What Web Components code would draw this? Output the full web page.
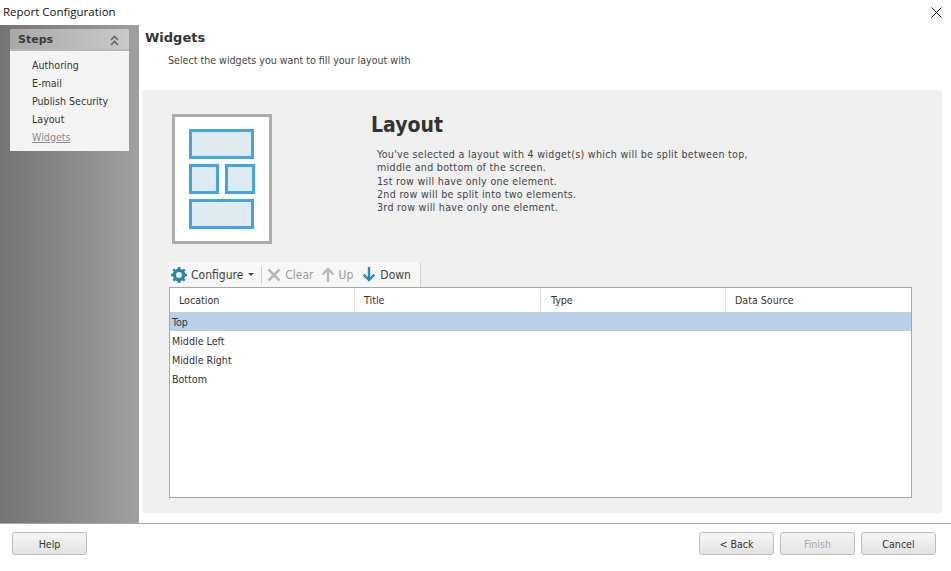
<!DOCTYPE html>
<html><head><meta charset="utf-8"><style>
html,body{margin:0;padding:0;background:#fff}
body{width:951px;height:571px;overflow:hidden;font-family:"DejaVu Sans",sans-serif}
</style></head><body>
<report-dialog></report-dialog>
<script>
class Base extends HTMLElement{
  constructor(){super();this.attachShadow({mode:'open'}).innerHTML=this.constructor.html}
}
class TitleBar extends Base{static html=`<style>
:host{display:flex;height:25px;align-items:center;justify-content:space-between;padding:0 9px 0 3px;box-sizing:border-box;font:11.5px "Open Sans",sans-serif;color:#111}
svg{display:block}
span{position:relative;top:-1px}
</style><span><slot></slot></span><svg width="11" height="11" viewBox="0 0 11 11" style="margin-top:-1px"><path d="M.5.5l10 10M10.500.5l-10 10" stroke="#111" fill="none"/></svg>`}
class StepsPanel extends Base{static html=`<style>
:host{display:block;width:119px;background:#f4f4f4;border-radius:3px 3px 0 0;font:10.6px/18px "DejaVu Sans",sans-serif;color:#333}
.h{height:22px;box-sizing:border-box;padding:2px 10px 0 8px;border-radius:3px 3px 0 0;background:linear-gradient(90deg,#a9a9a9,#c9c9c9);border-bottom:2px solid #b8b8b8;display:flex;align-items:center;justify-content:space-between;font-weight:bold;font-size:11px;color:#3a3a3a}
.b{padding:5px 0 5px 22px}
</style><div class="h"><span>Steps</span><svg width="9" height="11" viewBox="0 0 9 11"><path d="M1 5l3.500-3.500L8 5M1 10l3.500-3.500L8 10" fill="none" stroke="#666" stroke-width="1.6"/></svg></div><div class="b"><slot></slot></div>`}
class StepItem extends Base{static html=`<style>
:host{display:block;height:18px;white-space:nowrap;font-stretch:condensed}
:host([current]){color:#8a8a8a;text-decoration:underline}
</style><slot></slot>`}
class LayoutPreview extends Base{static html=`<style>
:host{display:grid;box-sizing:border-box;width:100px;height:130px;background:#fff;border:3px solid #adadad;padding:12px 14px;grid-template-columns:30px 30px;column-gap:6px;grid-template-rows:30px 30px 30px;row-gap:5px;flex:none}
i{display:block;box-sizing:border-box;background:#deecf1;border:3px solid #42a5e8}
.w{grid-column:1/3;width:65px}
</style><i class="w"></i><i></i><i></i><i class="w"></i>`}
class ToolButton extends Base{static html=`<style>
:host{display:inline-flex;align-items:center;gap:4px;height:22px;white-space:nowrap;font:12px "DejaVu Sans",sans-serif;font-stretch:condensed;color:#444}
:host([disabled]){color:#9a9a9a}
svg{display:block}
</style><slot name="icon"></slot><slot></slot>`}
class WidgetToolbar extends Base{static html=`<style>
:host{display:flex;align-items:center;align-self:flex-start;height:25px;box-sizing:border-box;background:#f7f7f7;border-radius:3px 3px 0 0;border-right:1px solid #cfcfcf;padding:0 0 0 2px;gap:9px;margin-left:27px;width:252px}
</style><slot></slot>`}
class WidgetTable extends Base{static html=`<style>
:host{display:block;box-sizing:border-box;height:211px;width:743px;margin-left:27px;background:#fff;border:1px solid #a6a6a6;font:10.6px "DejaVu Sans",sans-serif;font-stretch:condensed;color:#333}
.hd{display:grid;grid-template-columns:184px 186px 185px 1fr;height:24px;align-items:center}
.hd span{padding-left:9px;height:24px;line-height:24px;border-left:1px solid #e2e2e2}
.hd span:first-child{border-left:0}
.hd span:nth-child(3){padding-left:10px}
</style><div class="hd"><span>Location</span><span>Title</span><span>Type</span><span>Data Source</span></div><slot></slot>`}
class TableRow extends Base{static html=`<style>
:host{display:block;height:19px;line-height:20px;padding-left:2px;white-space:nowrap}
:host([selected]){background:#b9d1e8}
</style><slot></slot>`}
class WizButton extends Base{static html=`<style>
:host{display:flex;align-items:center;justify-content:center;box-sizing:border-box;width:75px;height:23px;border:1px solid #bdbdbd;border-radius:3px;background:linear-gradient(#f7f7f7,#e2e2e2);font:10.6px "DejaVu Sans",sans-serif;font-stretch:condensed;color:#333}
:host([disabled]){color:#a8a8a8;background:linear-gradient(#f2f2f2,#e6e6e6)}
</style><slot></slot>`}
class ReportDialog extends Base{static html=`<style>
:host{display:flex;flex-direction:column;width:951px;height:571px;background:#fff;font:10.6px "DejaVu Sans",sans-serif;font-stretch:condensed;color:#333}
.mid{display:flex;height:498px;border-bottom:1px solid #a8a8a8;box-sizing:content-box}
.side{width:139px;background:linear-gradient(90deg,#747474,#a0a0a0);padding:4px 0 0 10px;box-sizing:border-box;flex:none}
.main{flex:1;padding:0 9px 10px 3px;display:flex;flex-direction:column;min-width:0}
h1{margin:4px 0 0 3px;height:17px;font:bold 13px/17px "DejaVu Sans",sans-serif;color:#333}
.sub{margin:6px 0 0 26px;height:16px;line-height:16px;color:#444}
.panel{margin-top:22px;flex:1;background:#f0f0f0;border-radius:2px;display:flex;flex-direction:column}
.top{display:flex;padding:24px 0 0 30px;height:148px;box-sizing:content-box}
.info{margin-left:99px}
h2{margin:0;font:bold 21px/22px "DejaVu Sans",sans-serif;font-stretch:condensed;color:#333}
p{margin:12px 0 0 6px;line-height:13.25px;letter-spacing:.3px;color:#444;width:385px}
.foot{display:flex;align-items:center;padding:8px 15px 0 12px;gap:6px}
.sp{flex:1}
.sep{width:1px;height:16px;background:#c9c9c9;margin:0 -4px 0 -2px}
.up{margin-left:-2px}
</style>
<title-bar>Report Configuration</title-bar>
<div class="mid">
<div class="side"><steps-panel><step-item>Authoring</step-item><step-item>E-mail</step-item><step-item>Publish Security</step-item><step-item>Layout</step-item><step-item current>Widgets</step-item></steps-panel></div>
<div class="main"><h1>Widgets</h1><div class="sub">Select the widgets you want to fill your layout with</div>
<div class="panel"><div class="top"><layout-preview></layout-preview><div class="info"><h2>Layout</h2><p>You've selected a layout with 4 widget(s) which will be split between top, middle and bottom of the screen.<br>1st row will have only one element.<br>2nd row will be split into two elements.<br>3rd row will have only one element.</p></div></div>
<widget-toolbar>
<tool-button><svg slot="icon" width="16" height="16" viewBox="0 0 16 16"><circle cx="8" cy="8" r="4.600" fill="none" stroke="#2a86a8" stroke-width="3.400"/><path d="M8 0v3M8 13v3M0 8h3M13 8h3M2.300 2.300l2.100 2.100M11.600 11.600l2.100 2.100M13.700 2.300l-2.100 2.100M4.400 11.600l-2.100 2.100" stroke="#2a86a8" stroke-width="2.600"/></svg>Configure<svg width="6" height="3" viewBox="0 0 6 3" style="margin-left:1px"><path d="M0 0h6L3 3z" fill="#444"/></svg></tool-button>
<span class="sep"></span>
<tool-button disabled><svg slot="icon" width="14" height="14" viewBox="0 0 14 14"><path d="M1.500 1.500l11 11M12.500 1.500l-11 11" stroke="#b8b8b8" stroke-width="2.600"/></svg>Clear</tool-button>
<tool-button class="up" disabled><svg slot="icon" width="14" height="15" viewBox="0 0 14 15"><path d="M7 15V2M1.500 7.500L7 2l5.500 5.500" fill="none" stroke="#b8b8b8" stroke-width="2.400"/></svg>Up</tool-button>
<tool-button><svg slot="icon" width="14" height="15" viewBox="0 0 14 15"><path d="M7 0v13M1.500 7.500L7 13l5.500-5.500" fill="none" stroke="#2a86c0" stroke-width="2.400"/></svg>Down</tool-button>
</widget-toolbar>
<widget-table><table-row selected>Top</table-row><table-row>Middle Left</table-row><table-row>Middle Right</table-row><table-row>Bottom</table-row></widget-table>
</div></div></div>
<div class="foot"><wiz-button>Help</wiz-button><span class="sp"></span><wiz-button>&lt; Back</wiz-button><wiz-button disabled>Finish</wiz-button><wiz-button>Cancel</wiz-button></div>`}
for(const [n,c] of Object.entries({'title-bar':TitleBar,'steps-panel':StepsPanel,'step-item':StepItem,'layout-preview':LayoutPreview,'tool-button':ToolButton,'widget-toolbar':WidgetToolbar,'widget-table':WidgetTable,'table-row':TableRow,'wiz-button':WizButton,'report-dialog':ReportDialog}))customElements.define(n,c);
</script></body></html>
